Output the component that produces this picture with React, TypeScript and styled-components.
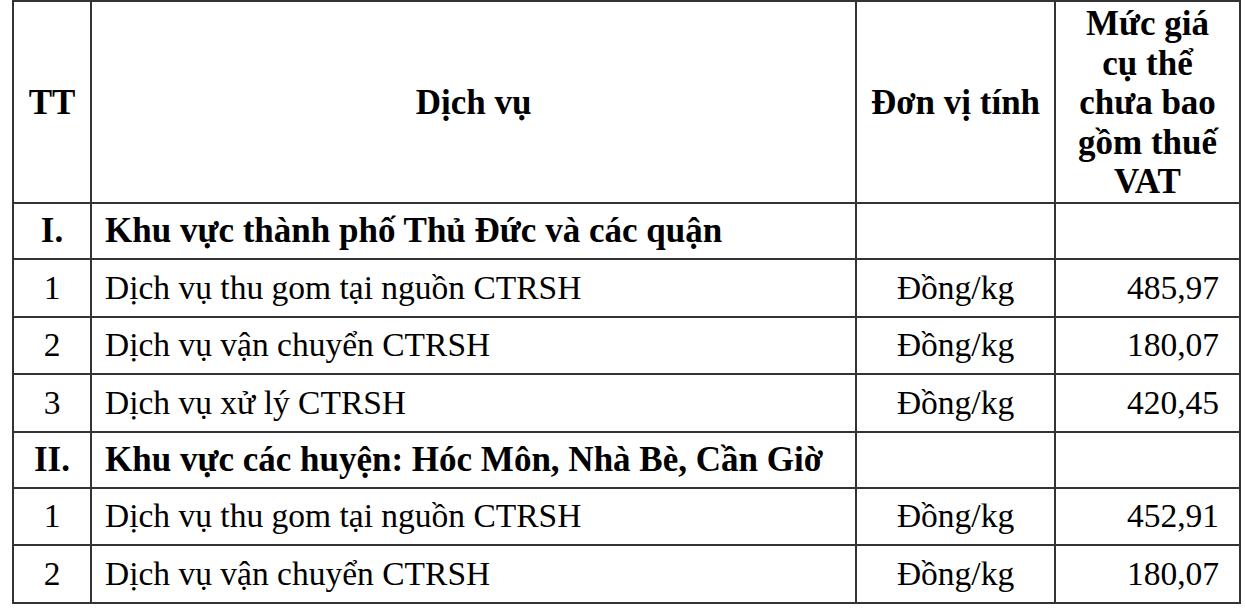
import React from 'react';
import styled, { createGlobalStyle } from 'styled-components';

const GlobalStyle = createGlobalStyle`
  html, body {
    margin: 0;
    padding: 0;
    background: #fff;
  }
  body {
    font-family: "Liberation Serif", "Times New Roman", serif;
    color: #000;
  }
`;

interface Row {
  tt: string;
  name: string;
  unit?: string;
  price?: string;
  section?: boolean;
}

const rows: Row[] = [
  { tt: 'I.', name: 'Khu vực thành phố Thủ Đức và các quận', section: true },
  { tt: '1', name: 'Dịch vụ thu gom tại nguồn CTRSH', unit: 'Đồng/kg', price: '485,97' },
  { tt: '2', name: 'Dịch vụ vận chuyển CTRSH', unit: 'Đồng/kg', price: '180,07' },
  { tt: '3', name: 'Dịch vụ xử lý CTRSH', unit: 'Đồng/kg', price: '420,45' },
  { tt: 'II.', name: 'Khu vực các huyện: Hóc Môn, Nhà Bè, Cần Giờ', section: true },
  { tt: '1', name: 'Dịch vụ thu gom tại nguồn CTRSH', unit: 'Đồng/kg', price: '452,91' },
  { tt: '2', name: 'Dịch vụ vận chuyển CTRSH', unit: 'Đồng/kg', price: '180,07' },
];

const App: React.FC = () => {
  return (
    <>
      <GlobalStyle />
      <Page>
        <PriceTable>
          <colgroup>
            <col style={{ width: 78 }} />
            <col style={{ width: 765 }} />
            <col style={{ width: 199 }} />
            <col style={{ width: 185 }} />
          </colgroup>
          <thead>
            <HeadRow>
              <HeadCell>TT</HeadCell>
              <HeadCell>Dịch vụ</HeadCell>
              <HeadCell>Đơn vị tính</HeadCell>
              <HeadCell>
                Mức giá<br />cụ thể<br />chưa bao<br />gồm thuế<br />VAT
              </HeadCell>
            </HeadRow>
          </thead>
          <tbody>
            {rows.map((r, i) => (
              <BodyRow key={i} section={r.section}>
                <Cell align="center" bold={r.section}>{r.tt}</Cell>
                <Cell align="left" bold={r.section}>{r.name}</Cell>
                <Cell align="center">{r.unit}</Cell>
                <Cell align="right">{r.price}</Cell>
              </BodyRow>
            ))}
          </tbody>
        </PriceTable>
      </Page>
    </>
  );
};

export default App;

const Page = styled.div`
  padding: 0 0 0 12px;
`;

const PriceTable = styled.table`
  border-collapse: collapse;
  table-layout: fixed;
  width: 1228px;
  font-size: 33.5px;
  line-height: 1.2;
  td, th {
    border: 2px solid #333;
  }
`;

const HeadRow = styled.tr`
  height: 202px;
`;

const HeadCell = styled.th`
  font-weight: bold;
  font-size: 35px;
  line-height: 39.6px;
  text-align: center;
  vertical-align: middle;
  padding: 2px 4px 0;
`;

const BodyRow = styled.tr<{ section?: boolean }>`
  height: ${p => (p.section ? '56px' : '57.6px')};
`;

const Cell = styled.td<{ align: 'left' | 'center' | 'right'; bold?: boolean }>`
  text-align: ${p => p.align};
  font-weight: ${p => (p.bold ? 'bold' : 'normal')};
  font-size: ${p => (p.bold ? '35px' : '33.5px')};
  vertical-align: middle;
  white-space: nowrap;
  padding: ${p => (p.align === 'right' ? '0 20px 0 6px' : p.align === 'left' ? '0 6px 0 13px' : '0 6px')};
`;
